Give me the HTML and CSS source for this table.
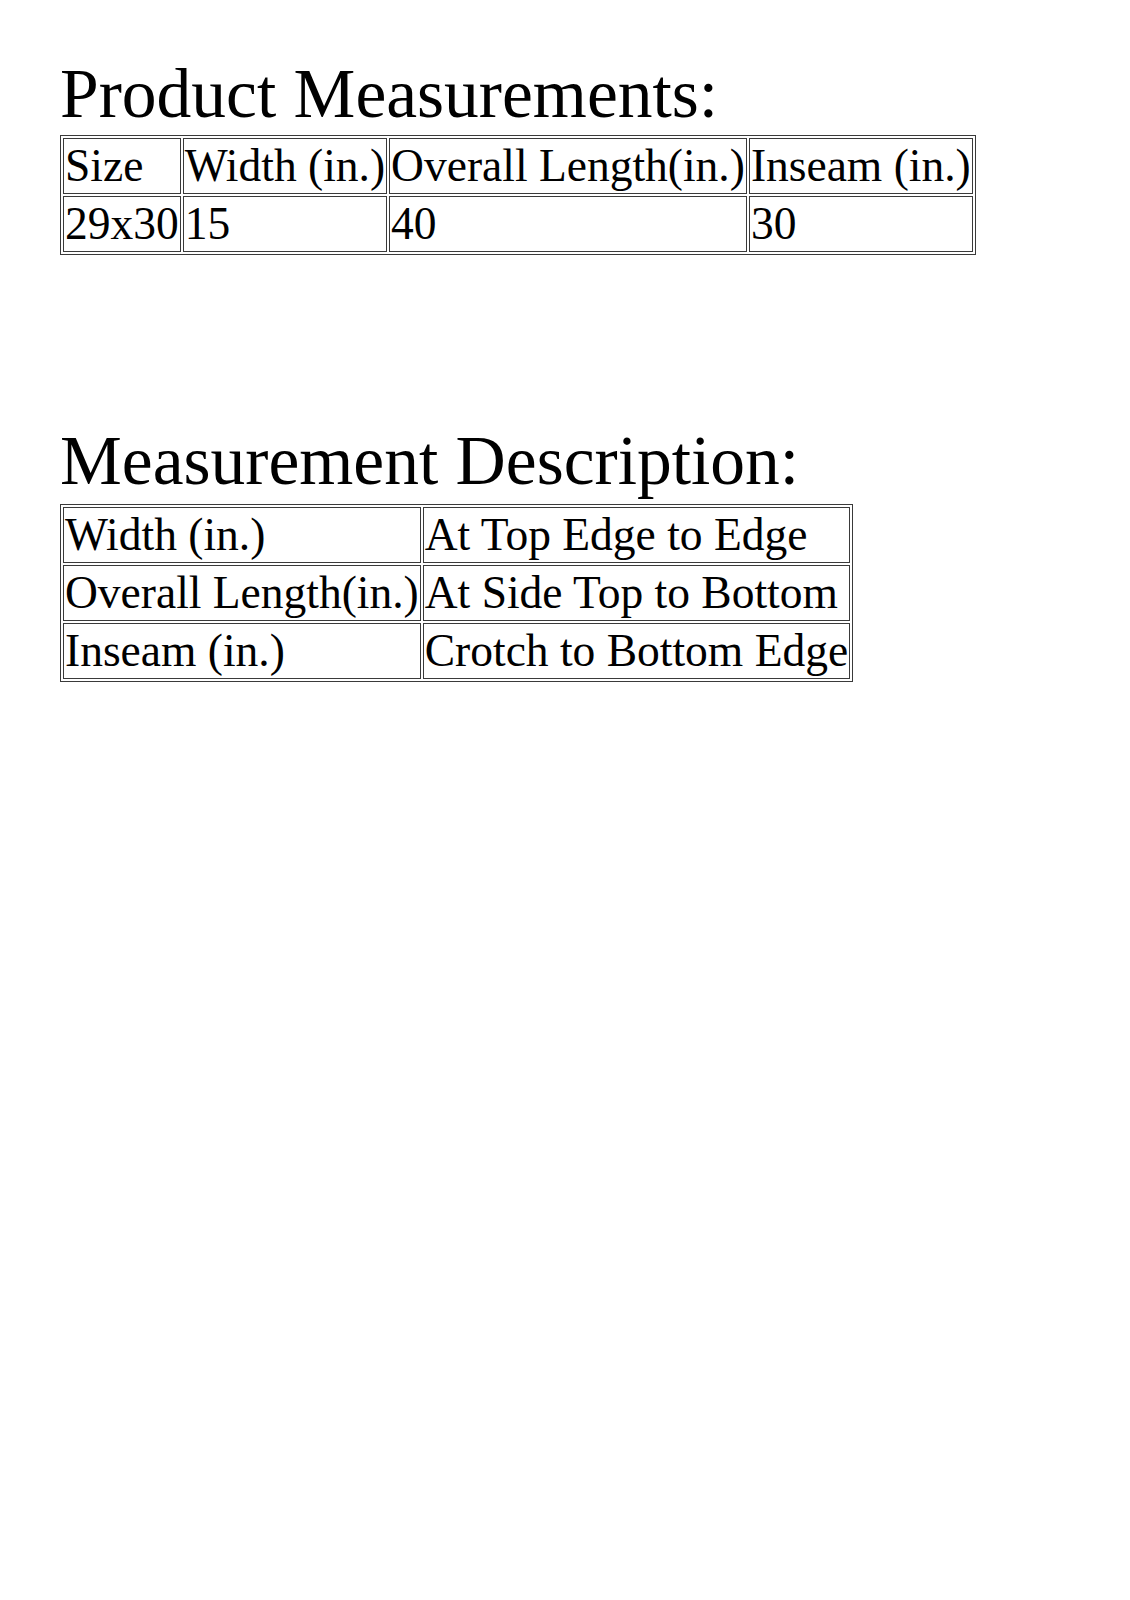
FILE: index.html
```html
<!DOCTYPE html>
<html lang="en">
<head>
<meta charset="utf-8">
<title>Product Measurements</title>
<link rel="stylesheet" href="styles.css">
</head>
<body>
<main class="page">
  <h2 class="title">Product Measurements:</h2>
  <table class="grid grid-first">
    <tr><td>Size</td><td>Width (in.)</td><td>Overall Length(in.)</td><td>Inseam (in.)</td></tr>
    <tr><td>29x30</td><td>15</td><td>40</td><td>30</td></tr>
  </table>
  <h2 class="title">Measurement Description:</h2>
  <table class="grid grid-second">
    <tr><td>Width (in.)</td><td>At Top Edge to Edge</td></tr>
    <tr><td>Overall Length(in.)</td><td>At Side Top to Bottom</td></tr>
    <tr><td>Inseam (in.)</td><td>Crotch to Bottom Edge</td></tr>
  </table>
</main>
</body>
</html>
```

FILE: styles.css
```css
html, body {
  margin: 0;
  padding: 0;
  background: #ffffff;
}

body {
  font-family: "Liberation Serif", "Times New Roman", serif;
  color: #000000;
}

.page {
  padding: 55px 0 0 60px;
}

.title {
  margin: 0;
  font-size: 69.5px;
  font-weight: normal;
  line-height: 77px;
}

.grid {
  border: 1px solid #3a3a3a;
  border-spacing: 2px;
  font-size: 45.5px;
  line-height: 54px;
}

.grid td {
  border: 1px solid #3a3a3a;
  padding: 0 1px;
  white-space: nowrap;
  vertical-align: middle;
}

.grid-first {
  margin-top: 3px;
  margin-bottom: 167px;
}

.grid-second {
  margin-top: 5px;
}
```
